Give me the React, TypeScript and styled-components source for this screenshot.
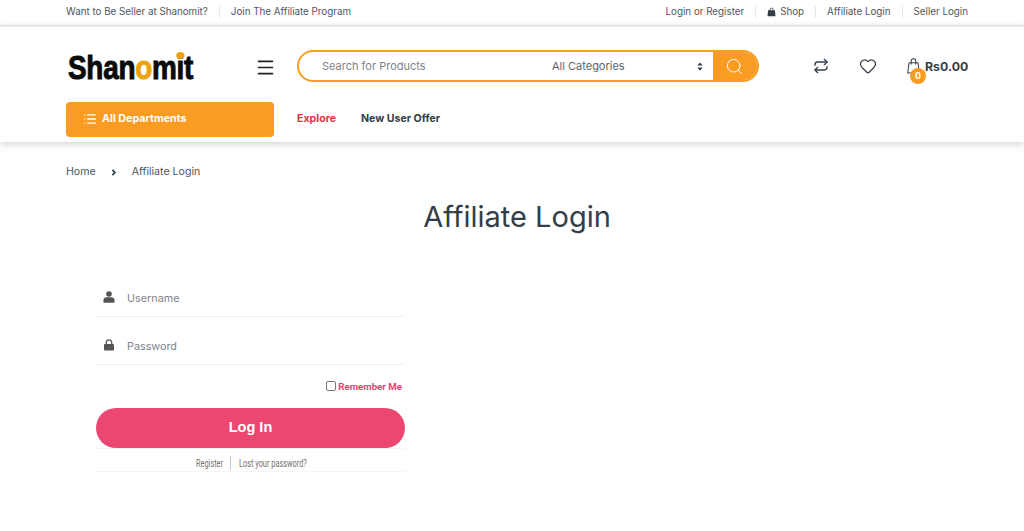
import React from "react";
import styled, { createGlobalStyle } from "styled-components";
import { Heart, Menu, Repeat, Search, List } from "lucide-react";

const GlobalStyle = createGlobalStyle`
  html, body {
    margin: 0;
    padding: 0;
    background: #fff;
    font-family: Inter, "Liberation Sans", sans-serif;
    color: #333e48;
  }
  * { box-sizing: border-box; }
`;

export default function App() {
  return (
    <Page>
      <GlobalStyle />
      <TopBar>
        <TopGroup>
          <TopLink>Want to Be Seller at Shanomit?</TopLink>
          <TopLink>Join The Affiliate Program</TopLink>
        </TopGroup>
        <TopGroup>
          <TopLink>Login or Register</TopLink>
          <TopLink>
            <BagGlyph viewBox="0 0 12 12">
              <path d="M1.500 3.500h9l.8 7.500a.8.8 0 0 1-.8.8h-9a.8.8 0 0 1-.8-.8z" fill="#333e48" />
              <path d="M4 5V2.800a2 2 0 0 1 4 0V5" fill="none" stroke="#333e48" strokeWidth="1.100" />
            </BagGlyph>
            Shop
          </TopLink>
          <TopLink>Affiliate Login</TopLink>
          <TopLink>Seller Login</TopLink>
        </TopGroup>
      </TopBar>
      <Header>
        <MainRow>
          <LogoBox>
            <Logo>
              Shan<LogoO>o</LogoO>m<LogoI>i</LogoI>t
            </Logo>
          </LogoBox>
          <MenuButton>
            <Menu size={21} strokeWidth={1.900} />
          </MenuButton>
          <SearchForm>
            <SearchText>Search for Products</SearchText>
            <CategorySelect>
              All Categories
              <SelectArrows viewBox="0 0 8 12">
                <path d="M4 .5l3.500 4.200H.5zM4 11.500L.5 7.300h7z" fill="#333e48" />
              </SelectArrows>
            </CategorySelect>
            <SearchButton>
              <Search size={19} strokeWidth={1.200} />
            </SearchButton>
          </SearchForm>
          <Actions>
            <ActionIcon>
              <Repeat size={16} strokeWidth={2} />
            </ActionIcon>
            <ActionIcon>
              <Heart size={18} strokeWidth={1.700} />
            </ActionIcon>
            <Cart>
              <CartBag viewBox="0 0 14 17">
                <path d="M2.200 5h9.600l1.400 11H.8z" fill="none" stroke="#333e48" strokeWidth="1.100" strokeLinejoin="round" />
                <path d="M4.500 7V3.200a2.500 2.500 0 0 1 5 0V7" fill="none" stroke="#333e48" strokeWidth="1.100" />
              </CartBag>
              <CartCount>0</CartCount>
              <CartTotal>Rs0.00</CartTotal>
            </Cart>
          </Actions>
        </MainRow>
        <NavRow>
          <DepartmentsButton>
            <List size={14} strokeWidth={2.200} />
            <span>All Departments</span>
          </DepartmentsButton>
          <NavLink $accent>Explore</NavLink>
          <NavLink>New User Offer</NavLink>
        </NavRow>
      </Header>
      <Breadcrumb>
        <span>Home</span>
        <Chevron viewBox="0 0 6 8">
          <path d="M1.200 1l2.800 3-2.800 3" fill="none" stroke="#333e48" strokeWidth="2" />
        </Chevron>
        <span>Affiliate Login</span>
      </Breadcrumb>
      <Title>Affiliate Login</Title>
      <LoginForm>
        <Field>
          <FieldIcon viewBox="0 0 12 12">
            <circle cx="6" cy="3" r="2.800" fill="#555" />
            <path d="M.5 11.800V8.800c0-1.500 1.500-2.600 3-2.600h5c1.500 0 3 1.100 3 2.600v3z" fill="#555" />
          </FieldIcon>
          <Placeholder>Username</Placeholder>
        </Field>
        <Field>
          <FieldIcon viewBox="0 0 12 12">
            <rect x="1" y="5" width="10" height="6.500" rx="1" fill="#555" />
            <path d="M3.300 5.500V3.500a2.700 2.700 0 0 1 5.400 0v2" fill="none" stroke="#555" strokeWidth="1.300" />
          </FieldIcon>
          <Placeholder>Password</Placeholder>
        </Field>
        <RememberRow>
          <CheckBox />
          Remember Me
        </RememberRow>
        <LoginButton>Log In</LoginButton>
        <FormLinks>
          <LinkBox $divided>
            <LinkText>Register</LinkText>
          </LinkBox>
          <LinkBox>
            <LinkText>Lost your password?</LinkText>
          </LinkBox>
        </FormLinks>
      </LoginForm>
    </Page>
  );
}

const Page = styled.div`
  width: 1024px;
  height: 531px;
  overflow: hidden;
  background: #fff;
`;

const TopBar = styled.div`
  display: flex;
  justify-content: space-between;
  align-items: center;
  height: 26px;
  padding: 0 56px 2px 66px;
  border-bottom: 1px solid #e6e6e6;
  box-shadow: 0 1px 1px #f2f2f2;
`;

const TopGroup = styled.div`
  display: flex;
  align-items: center;
`;

const TopLink = styled.span`
  display: flex;
  align-items: center;
  gap: 4px;
  font-size: 9.800px;
  line-height: 12px;
  color: #4d5660;
  padding: 0 11px;
  border-right: 1px solid #e8e8e8;
  &:first-child { padding-left: 0; }
  &:last-child { border-right: 0; padding-right: 0; }
`;

const BagGlyph = styled.svg`
  width: 9px;
  height: 10px;
`;

const Header = styled.header`
  height: 116px;
  padding: 24px 56px 0 66px;
  box-shadow: 0 2px 8px rgba(0, 0, 0, 0.18);
`;

const MainRow = styled.div`
  display: flex;
  align-items: center;
  height: 32px;
  & > * { flex-shrink: 0; }
`;

const LogoBox = styled.div`
  width: 181px;
  margin-left: 2px;
`;

const Logo = styled.div`
  display: inline-block;
  margin-top: 1px;
  font-family: "Liberation Sans", sans-serif;
  font-weight: 700;
  font-size: 34px;
  line-height: 32px;
  letter-spacing: -0.300px;
  color: #0a0a0a;
  -webkit-text-stroke: 1px #0a0a0a;
  white-space: nowrap;
  transform: scaleX(0.82);
  transform-origin: left center;
`;

const LogoO = styled.span`
  color: #eda20c;
  -webkit-text-stroke: 1px #eda20c;
`;

const LogoI = styled.span`
  position: relative;
  &::before {
    content: "";
    position: absolute;
    left: 0;
    top: 4px;
    width: 10px;
    height: 7px;
    border-radius: 50%;
    background: #eda20c;
  }
`;

const MenuButton = styled.div`
  display: flex;
  width: 42px;
  margin: 2px 0 0 6px;
  color: #1d2329;
`;

const SearchForm = styled.div`
  display: flex;
  align-items: stretch;
  width: 462px;
  height: 32px;
  border: 2px solid #fb9c22;
  border-radius: 16px;
  overflow: hidden;
`;

const SearchText = styled.div`
  width: 231px;
  padding-left: 23px;
  font-size: 11px;
  line-height: 28px;
  color: #7d848b;
`;

const CategorySelect = styled.div`
  display: flex;
  justify-content: space-between;
  align-items: center;
  width: 183px;
  padding: 0 10px 0 22px;
  font-size: 11px;
  color: #5b646c;
`;

const SelectArrows = styled.svg`
  width: 6px;
  height: 9px;
`;

const SearchButton = styled.div`
  display: flex;
  flex: 1;
  align-items: center;
  justify-content: center;
  padding-right: 2px;
  background: #fb9c22;
  color: #fff;
`;

const Actions = styled.div`
  display: flex;
  align-items: center;
  margin-left: 54px;
`;

const ActionIcon = styled.div`
  display: flex;
  width: 46px;
  color: #333e48;
`;

const Cart = styled.div`
  position: relative;
  display: flex;
  align-items: center;
  gap: 5px;
  margin-left: 2px;
  color: #333e48;
`;

const CartBag = styled.svg`
  width: 13px;
  height: 16px;
`;

const CartCount = styled.span`
  position: absolute;
  left: 3px;
  top: 10px;
  width: 16px;
  height: 16px;
  border-radius: 50%;
  background: #fb9c22;
  color: #fff;
  font-size: 9px;
  font-weight: 700;
  line-height: 16px;
  text-align: center;
`;

const CartTotal = styled.span`
  font-size: 12.300px;
  font-weight: 700;
  color: #333e48;
`;

const NavRow = styled.nav`
  display: flex;
  align-items: center;
  margin-top: 20px;
`;

const DepartmentsButton = styled.div`
  display: flex;
  align-items: center;
  gap: 5px;
  width: 208px;
  height: 35px;
  margin-right: 23px;
  padding: 0 0 2px 17px;
  border-radius: 4px;
  background: #fb9c22;
  color: #fff;
  font-size: 10.700px;
  font-weight: 700;
`;

const NavLink = styled.span<{ $accent?: boolean }>`
  margin: -2px 25px 0 0;
  font-size: 10.600px;
  font-weight: 700;
  color: ${(p) => (p.$accent ? "#e7323f" : "#333e48")};
`;

const Breadcrumb = styled.div`
  display: flex;
  align-items: center;
  gap: 15px;
  padding: 23px 0 0 66px;
  font-size: 10.600px;
  line-height: 14px;
  color: #4d5660;
`;

const Chevron = styled.svg`
  width: 6px;
  height: 7px;
`;

const Title = styled.h1`
  margin: 19px 0 0;
  padding-left: 10px;
  font-size: 29px;
  font-weight: 400;
  line-height: 38px;
  text-align: center;
  color: #333e48;
`;

const LoginForm = styled.form`
  width: 309px;
  margin: 45px 0 0 96px;
`;

const Field = styled.div`
  display: flex;
  align-items: center;
  height: 36px;
  margin-bottom: 12px;
  padding-left: 7px;
  border-bottom: 1px solid #f2f2f2;
`;

const FieldIcon = styled.svg`
  width: 12px;
  height: 12px;
  margin: -4px 12px 0 0;
`;

const Placeholder = styled.span`
  font-size: 10.800px;
  color: #7d848b;
`;

const RememberRow = styled.label`
  display: flex;
  justify-content: flex-end;
  align-items: center;
  gap: 2px;
  height: 12px;
  margin: 15px 3px 16px 0;
  font-family: Roboto, sans-serif;
  font-size: 9.700px;
  font-weight: 700;
  color: #e8436f;
`;

const CheckBox = styled.span`
  width: 10px;
  height: 10px;
  border: 1px solid #767676;
  border-radius: 2px;
`;

const LoginButton = styled.div`
  height: 40px;
  border-radius: 20px;
  background: #ec4771;
  color: #fff;
  font-family: "Liberation Sans", sans-serif;
  font-size: 14.500px;
  font-weight: 700;
  line-height: 39px;
  text-align: center;
`;

const FormLinks = styled.div`
  display: flex;
  align-items: flex-end;
  height: 24px;
  padding-left: 100px;
  border-top: 1px solid #f5f5f5;
  border-bottom: 1px solid #f5f5f5;
`;

const LinkBox = styled.div<{ $divided?: boolean }>`
  display: flex;
  height: 14px;
  margin-bottom: 1px;
  padding-left: ${(p) => (p.$divided ? "0" : "8px")};
  width: ${(p) => (p.$divided ? "35px" : "auto")};
  border-right: ${(p) => (p.$divided ? "1px solid #c4c4c4" : "0")};
`;

const LinkText = styled.span`
  display: inline-block;
  margin-top: 1px;
  font-family: Roboto, sans-serif;
  font-size: 11px;
  line-height: 14px;
  color: #77706a;
  white-space: nowrap;
  transform: scaleX(0.67);
  transform-origin: left center;
`;
